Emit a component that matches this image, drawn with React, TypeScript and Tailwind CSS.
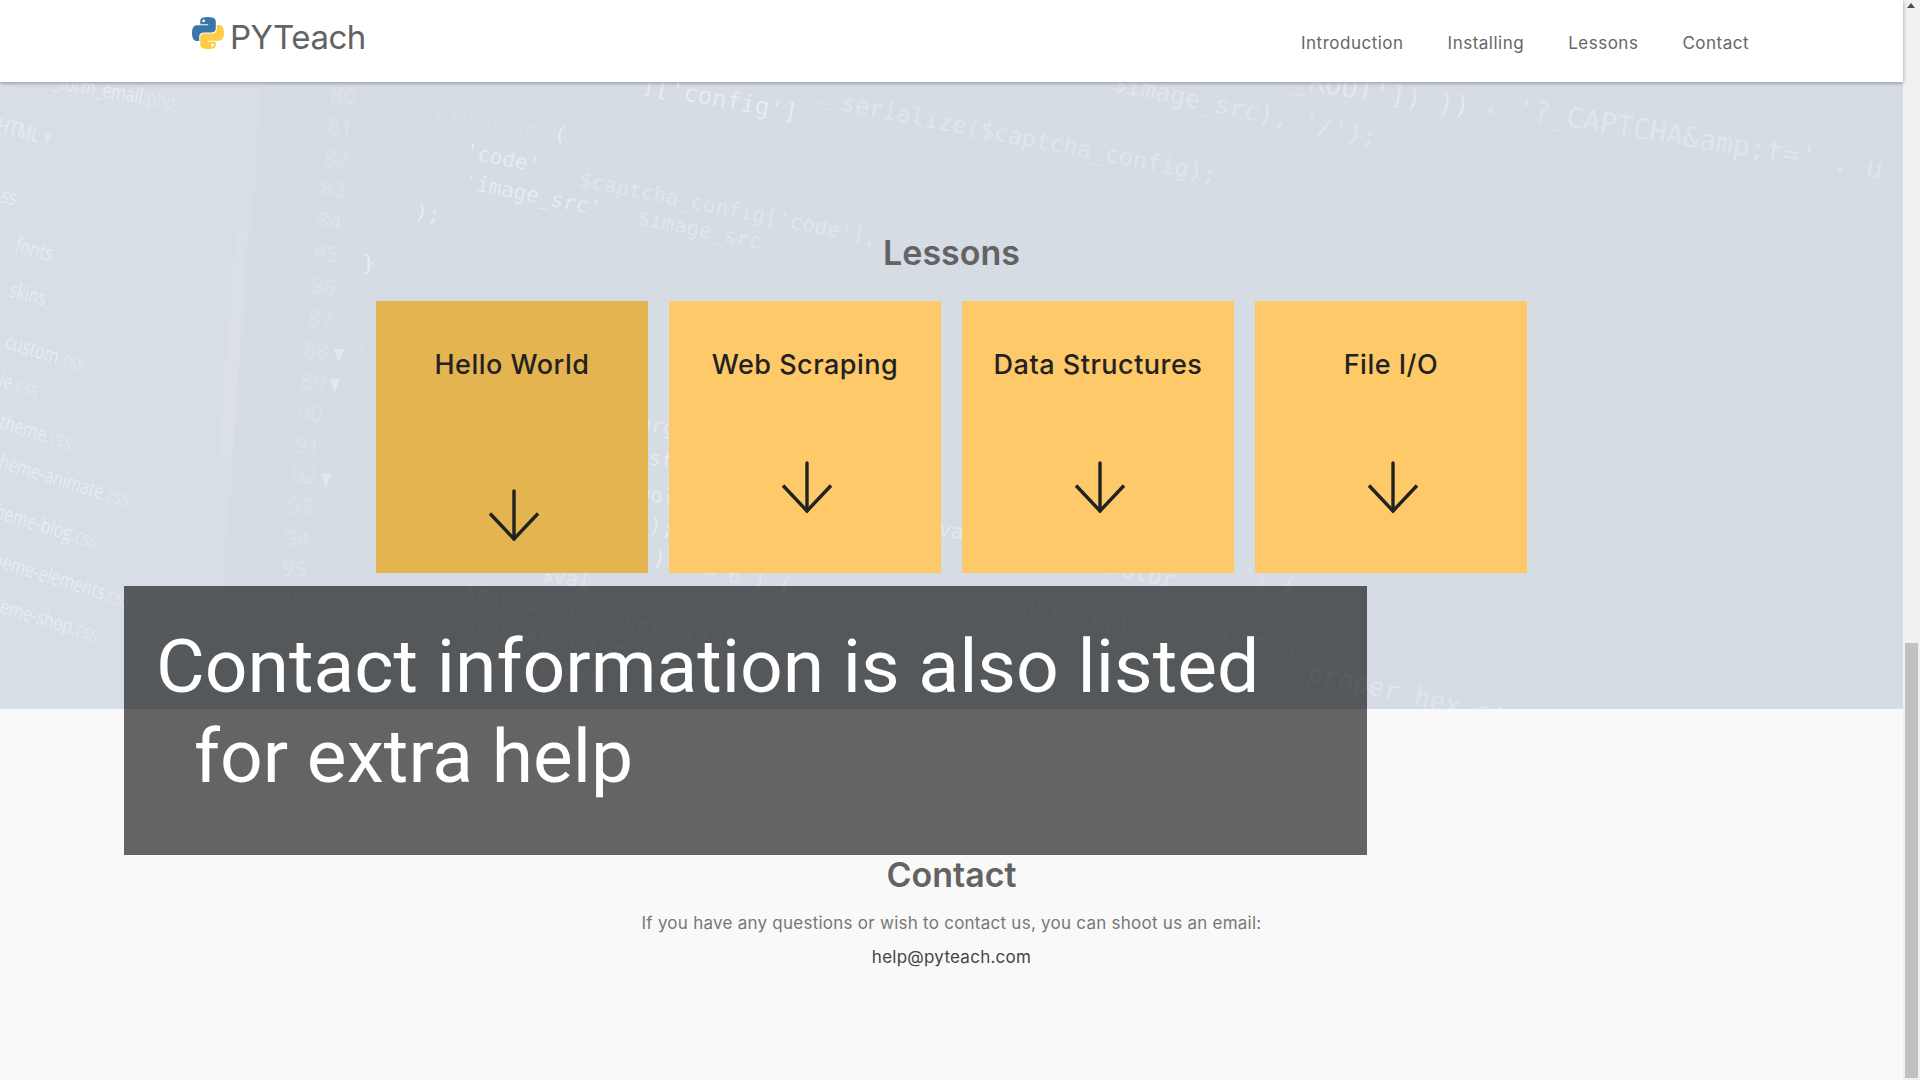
const navLinks = ["Introduction", "Installing", "Lessons", "Contact"]
const lessons = ["Hello World", "Web Scraping", "Data Structures", "File I/O"]

// faint code lines of the section's background picture: x, y (page px minus header), angle, opacity, text, font size
const codeLines: [number, number, number, number, string, number][] = [
  [423, 36, 10, 0.1, "return array", 21],
  [553, 58, 10, 0.45, "(", 21],
  [464, 76, 11, 0.45, "'code'", 21],
  [545, 92, 11, 0.12, "=>", 21],
  [578, 104, 11.3, 0.3, "$captcha_config['code'],", 21],
  [463, 106, 11.5, 0.45, "'image_src'", 21],
  [600, 132, 11.5, 0.12, "=>", 21],
  [636, 142, 11.5, 0.3, "$image_src", 21],
  [414, 136, 11, 0.45, ");", 21],
  [640, 10, 10.5, 0.45, "]['config']", 24],
  [815, 30, 10.5, 0.12, "=", 24],
  [840, 28, 11, 0.3, "serialize($captcha_config);", 23.5],
  [1110, 8, 12, 0.3, "$image_src), '/');", 25],
  [1292, 6, 9, 0.35, "_ROOT']) ))", 27],
  [1482, 30, 9.5, 0.3, ". '?_CAPTCHA&amp;t=' . u", 28],
  [362, 188, 0, 0.5, "}", 21],
  [355, 274, 0, 0.12, "if", 21],
  [625, 345, 10, 0.4, "targ", 21],
  [635, 380, 10, 0.4, "$st", 21],
  [637, 417, 10, 0.4, "bol", 21],
  [648, 450, 10, 0.45, ");", 21],
  [652, 482, 10, 0.45, ")", 21],
  [925, 451, 10, 0.4, "$val", 21],
  [540, 498, 11, 0.3, "$val", 21],
  [690, 492, 11, 0.3, "== 6 ) {", 21],
  [462, 515, 11, 0.2, "$rgb_array - hexdec($hex_str);", 21],
  [462, 545, 11, 0.2, "$rgb_array['r']", 21],
  [462, 578, 11, 0.2, "$rgb_array[", 21],
  [1007, 526, 13, 0.2, "$hex_str);", 23],
  [1177, 551, 13, 0.2, "// Get a", 25],
  [1306, 598, 13, 0.3, "proper hex string", 26],
  [1052, 480, 12, 0.3, "separator", 23],
  [1240, 500, 12, 0.2, "') {", 23],
]

const lineNumbers: [number, number, string][] = [
  [330, 20, "80"], [327, 51, "81"], [323, 83, "82"], [320, 113, "83"],
  [316, 145, "84"], [313, 178, "85"], [310, 211, "86"], [307, 243, "87"],
  [303, 275, "88"], [300, 306, "89"], [297, 338, "90"], [294, 370, "91"],
  [291, 400, "92"], [287, 431, "93"], [284, 463, "94"], [281, 493, "95"], [278, 524, "96"],
]

// file tree: x, y, angle, name, extension
const treeItems: [number, number, number, string, string][] = [
  [52, 6, 10, "_form_email", ".php"],
  [-4, 50, 14, "HTML", " ▾"],
  [0, 120, 14, "ss", ""],
  [14, 170, 14, "fonts", ""],
  [8, 214, 15, "skins", ""],
  [4, 266, 17, "custom", ".css"],
  [-2, 304, 17, "ie", ".css"],
  [-2, 346, 17, "theme", ".css"],
  [-8, 384, 17, "theme-animate", ".css"],
  [-12, 434, 17, "theme-blog", ".css"],
  [-14, 482, 17, "theme-elements", ".css"],
  [-16, 526, 17, "theme-shop", ".css"],
]

const CodeBackdrop = () => (
  <svg
    viewBox="0 0 1903 627"
    width={1903}
    height={627}
    className="absolute left-0 top-0"
    aria-hidden="true"
  >
    <polygon points="0,0 262,0 213,627 0,627" fill="#ffffff" fillOpacity="0.08" />
    <line x1="0" y1="3" x2="256" y2="60" stroke="#ffffff" strokeOpacity="0.1" strokeWidth="2" />
    <polygon points="237,144 247,144 232,380 218,378" fill="#ffffff" fillOpacity="0.08" />
    <g fontFamily="'DejaVu Sans Mono', monospace" fill="#ffffff">
      {codeLines.map(([x, y, angle, opacity, text, size]) => (
        <text
          key={`${x}-${y}`}
          x={x}
          y={y}
          fontSize={size}
          fillOpacity={opacity}
          transform={`rotate(${angle} ${x} ${y})`}
        >
          {text}
        </text>
      ))}
    </g>
    <g fontFamily="'Open Sans', sans-serif" fontSize="22" fill="#ffffff" fillOpacity="0.2">
      {lineNumbers.map(([x, y, text]) => (
        <text key={text} x={x} y={y} transform={`rotate(6 ${x} ${y})`}>
          {text}
        </text>
      ))}
    </g>
    <g fill="#ffffff" fillOpacity="0.35">
      <polygon points="334,267 344,267 339,281" />
      <polygon points="330,297 340,297 335,311" />
      <polygon points="321,392 331,392 326,406" />
    </g>
    <g fontFamily="'Open Sans', sans-serif" fontSize="21" fontWeight="500" fill="#ffffff">
      {treeItems.map(([x, y, angle, name, ext]) => (
        <text key={name} transform={`translate(${x} ${y}) rotate(${angle}) scale(0.76 1)`} fillOpacity="0.42">
          {name}
          <tspan fillOpacity="0.25" fontWeight="400">{ext}</tspan>
        </text>
      ))}
    </g>
  </svg>
)

const PythonLogo = () => {
  const half =
    "M54.9 0C26.8 0 28.5 12.2 28.5 12.2l.03 12.6h26.8v3.8H17.9S0 26.6 0 54.9c0 28.3 15.6 27.3 15.6 27.3h9.3V69s-.5-15.6 15.4-15.6h26.5s14.9.2 14.9-14.4V14.8S84 0 54.9 0zM40.1 8.5c2.7 0 4.8 2.2 4.8 4.8 0 2.7-2.2 4.8-4.8 4.8-2.7 0-4.8-2.2-4.8-4.8 0-2.7 2.2-4.8 4.8-4.8z"
  return (
    <svg viewBox="0 0 110 110" width={32} height={32} aria-hidden="true">
      <path d={half} fill="#3b76a8" fillRule="evenodd" />
      <path d={half} fill="#fdcd47" fillRule="evenodd" transform="rotate(180 55 55)" />
    </svg>
  )
}

const ArrowDown = () => (
  <svg
    viewBox="0 0 52 52"
    width={52}
    height={52}
    fill="none"
    stroke="#222222"
    strokeWidth="3.4"
    strokeLinecap="round"
    aria-hidden="true"
    className="ml-1"
  >
    <path d="M26 2v48" />
    <path d="M2 24.5 26 50l24-25.5" strokeLinecap="butt" />
  </svg>
)

export default function App() {
  return (
    <div className="flex h-screen w-full overflow-hidden font-['Inter',sans-serif]">
      <main className="relative w-[1903px] shrink-0 bg-[#f9f9f9]">
        <header className="relative z-10 flex h-[82px] items-start justify-between bg-white pl-[192px] pr-[154px] shadow-[0_1px_4px_rgba(0,0,0,0.35)]">
          <a className="mt-[17px] flex items-start gap-[6px]">
            <PythonLogo />
            <span className="mt-[4px] text-[33px] leading-[32px] tracking-[-0.5px] text-[#636363]">PYTeach</span>
          </a>
          <nav className="mt-[32px] flex gap-[44px] text-[17px] leading-[22px] tracking-[0.5px] text-[#666666]">
            {navLinks.map((link) => (
              <a key={link}>{link}</a>
            ))}
          </nav>
        </header>

        <section className="relative h-[627px] overflow-hidden bg-[#d5dce4] pt-[151px]">
          <CodeBackdrop />
          <h2 className="relative text-center text-[34px] font-semibold leading-[40px] text-[#636363]">Lessons</h2>
          <div className="relative mt-[28px] grid grid-cols-[repeat(4,272px)] justify-center gap-[21px]">
            {lessons.map((lesson, index) => (
              <div
                key={lesson}
                className={`flex h-[272px] flex-col items-center pt-[48px] ${index === 0 ? "bg-[#e3b44f]" : "bg-[#fec968]"}`}
              >
                <h3 className="text-[27px] font-medium leading-[32px] tracking-[0.5px] text-[#222222]">{lesson}</h3>
                <div className={index === 0 ? "mt-[108px]" : "mt-[80px]"}>
                  <ArrowDown />
                </div>
              </div>
            ))}
          </div>
        </section>

        <section className="pt-[146px] text-center">
          <h2 className="text-[34px] font-semibold leading-[40px] text-[#636363]">Contact</h2>
          <p className="mt-[16px] text-[17px] leading-[24px] tracking-[0.25px] text-[#777777]">
            If you have any questions or wish to contact us, you can shoot us an email:
          </p>
          <p className="mt-[10px] text-[17px] leading-[24px] tracking-[0.25px] text-[#444444]">help@pyteach.com</p>
        </section>

        <div className="absolute left-[124px] top-[586px] z-20 h-[269px] w-[1243px] bg-black/60 pl-[70px] pr-[60px] pt-[35px] -indent-[38px] font-['Roboto',sans-serif] text-[75px] leading-[90px] text-white">
          Contact information is also listed for extra help
        </div>
      </main>

      <aside className="relative w-[17px] shrink-0 bg-[#f1f1f1]">
        <div className="absolute left-[4px] top-[3px] h-0 w-0 border-x-[4px] border-b-[5px] border-x-transparent border-b-[#505050]" />
        <div className="absolute bottom-[2px] left-[2px] top-[643px] w-[13px] bg-[#c1c1c1]" />
      </aside>
    </div>
  )
}
